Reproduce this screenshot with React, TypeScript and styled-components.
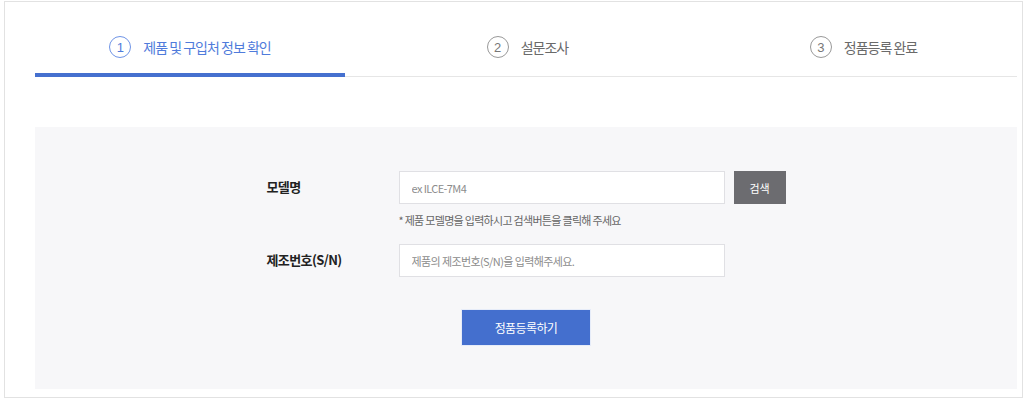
import styled, { createGlobalStyle } from 'styled-components'

const GlobalStyle = createGlobalStyle`
    html, body {
        margin: 0;
        padding: 0;
        background: #ffffff;
        font-family: 'Noto Sans CJK KR', 'Noto Sans', sans-serif;
    }
`

const steps = [
    { no: 1, label: '제품 및 구입처 정보 확인', width: 310 },
    { no: 2, label: '설문조사', width: 365 },
    { no: 3, label: '정품등록 완료', width: 306 },
]

export default function App() {
    return (
        <>
            <GlobalStyle />
            <Frame>
                <Tabs>
                    {steps.map((s, i) => (
                        <Tab key={s.no} $active={i === 0} $width={s.width}>
                            <StepNo $active={i === 0}>{s.no}</StepNo>
                            <StepLabel $active={i === 0}>{s.label}</StepLabel>
                        </Tab>
                    ))}
                </Tabs>
                <Panel>
                    <Form>
                        <Row>
                            <Label>모델명</Label>
                            <Field>
                                <InputLine>
                                    <Input placeholder="ex ILCE-7M4" />
                                    <SearchButton>검색</SearchButton>
                                </InputLine>
                                <Hint>* 제품 모델명을 입력하시고 검색버튼을 클릭해 주세요</Hint>
                            </Field>
                        </Row>
                        <Row>
                            <Label>제조번호(S/N)</Label>
                            <Field>
                                <Input placeholder="제품의 제조번호(S/N)을 입력해주세요." />
                            </Field>
                        </Row>
                    </Form>
                    <SubmitButton>정품등록하기</SubmitButton>
                </Panel>
            </Frame>
        </>
    )
}

const Frame = styled.div`
    box-sizing: border-box;
    margin: 1px 0 0 4px;
    width: 1019px;
    height: 397px;
    border: 1px solid #e2e2e2;
    padding: 0 5px 0 30px;
`

const Tabs = styled.div`
    display: flex;
    height: 74px;
    margin-top: 1px;
`

const Tab = styled.div<{ $active: boolean; $width: number }>`
    box-sizing: border-box;
    display: flex;
    align-items: flex-start;
    justify-content: center;
    padding-top: 33px;
    width: ${(p) => p.$width}px;
    flex: ${(p) => (p.$width === 306 ? 1 : 'none')};
    border-bottom: ${(p) => (p.$active ? '4px solid #4570cf' : '1px solid #e6e6e6')};
`

const StepNo = styled.span<{ $active: boolean }>`
    box-sizing: border-box;
    width: 22px;
    height: 22px;
    border-radius: 50%;
    border: 1px solid ${(p) => (p.$active ? '#6f94e6' : '#999999')};
    color: ${(p) => (p.$active ? '#4f7bdb' : '#777777')};
    font-family: 'Liberation Sans', sans-serif;
    font-size: 13px;
    display: flex;
    align-items: center;
    justify-content: center;
    margin-right: 12px;
`

const StepLabel = styled.span<{ $active: boolean }>`
    font-size: 14px;
    line-height: 22px;
    letter-spacing: -1px;
    color: ${(p) => (p.$active ? '#4f7bdb' : '#6a6a6a')};
`

const Panel = styled.div`
    margin-top: 50px;
    height: 262px;
    background: #f7f7f9;
    display: flex;
    flex-direction: column;
    align-items: center;
    padding-top: 44px;
    box-sizing: border-box;
`

const Form = styled.div`
    display: flex;
    flex-direction: column;
    gap: 16px;
`

const Row = styled.div`
    display: flex;
    align-items: flex-start;
`

const Label = styled.div`
    width: 132px;
    height: 32px;
    line-height: 32px;
    font-size: 13px;
    font-weight: 700;
    letter-spacing: -0.6px;
    color: #222222;
`

const Field = styled.div`
    display: flex;
    flex-direction: column;
    width: 387px;
`

const InputLine = styled.div`
    display: flex;
    gap: 9px;
`

const Input = styled.input`
    box-sizing: border-box;
    width: 326px;
    height: 33px;
    border: 1px solid #e0e0e4;
    background: #ffffff;
    padding: 0 12px;
    font-family: 'Noto Sans CJK KR', sans-serif;
    font-size: 11px;
    letter-spacing: -0.6px;
    outline: none;

    &::placeholder {
        color: #8c8c8c;
    }
`

const SearchButton = styled.button`
    width: 52px;
    height: 33px;
    border: none;
    background: #6c6c70;
    color: #ffffff;
    font-family: 'Noto Sans CJK KR', sans-serif;
    font-size: 11px;
    cursor: pointer;
`

const Hint = styled.p`
    margin: 8px 0 0;
    font-size: 11px;
    letter-spacing: -0.7px;
    color: #666666;
`

const SubmitButton = styled.button`
    margin-top: 32px;
    width: 130px;
    height: 37px;
    border: 1px solid #e6ecf9;
    background: #446fce;
    color: #ffffff;
    font-family: 'Noto Sans CJK KR', sans-serif;
    font-size: 12px;
    letter-spacing: -0.6px;
    cursor: pointer;
`
